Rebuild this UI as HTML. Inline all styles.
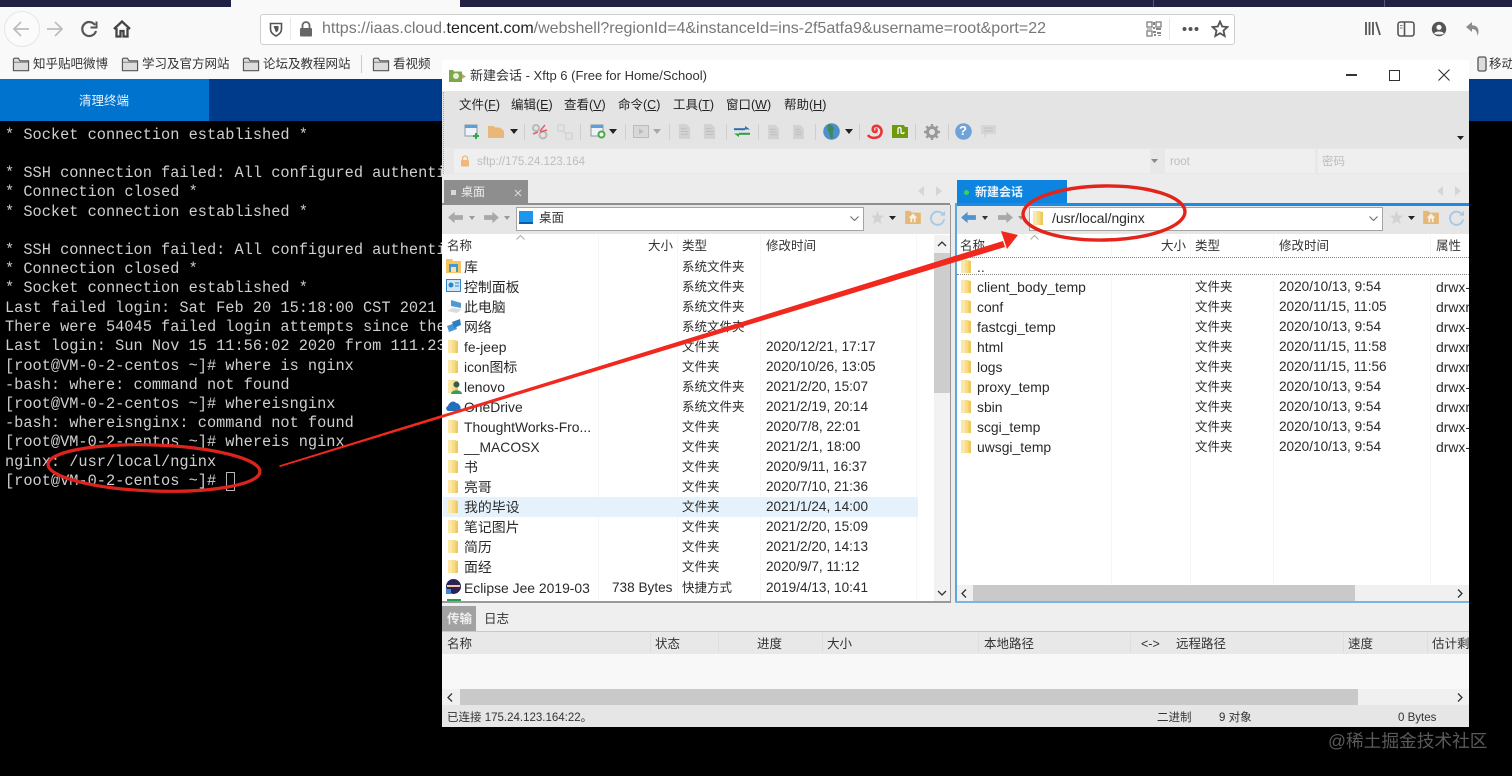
<!DOCTYPE html>
<html lang="zh"><head><meta charset="utf-8"><title>Xftp</title>
<style>
html{background:#000}
html,body{margin:0;padding:0;width:1512px;height:776px;overflow:hidden}
body{position:relative;font-family:"Liberation Sans","Noto Sans CJK SC",sans-serif;font-size:13px;color:#222;filter:blur(.3px);background:#000}
div,span,svg{position:absolute}
.t{white-space:nowrap;line-height:20px}
.b{background:#f9f9fa}
.term{font-family:"Liberation Mono",monospace;font-size:15.3px;color:#cfcfcf;white-space:pre;left:5px;line-height:19.2px;margin-top:1px}
.bm{top:54px;font-size:12.5px;color:#333;white-space:nowrap;line-height:20px}
.m{top:95px;font-size:12.5px;color:#222;white-space:nowrap;line-height:20px}
.m u{text-decoration:underline}
.h{top:236px;font-size:12.5px;color:#333;white-space:nowrap;line-height:20px}
.r{font-size:13.9px;line-height:20px;color:#2a2a2a;white-space:nowrap;height:20px;margin-top:1px}
.c{font-size:12.5px;line-height:20px;color:#2a2a2a;white-space:nowrap;height:20px;margin-top:1px}
.d{font-size:13.6px;line-height:20px;color:#2a2a2a;white-space:nowrap;height:20px;margin-top:1px}
.a{font-size:13.9px;line-height:20px;color:#2a2a2a;white-space:nowrap;height:20px;margin-top:1px;left:1436px;width:33px;overflow:hidden}
.q{top:634px;font-size:12.5px;color:#333;white-space:nowrap;line-height:20px}
.s{top:708px;font-size:11.5px;color:#333;white-space:nowrap;line-height:20px}
.v{width:1px;background:#f6f6f6}
.sep{top:124px;width:1px;height:16px;background:#cfcfcf}
</style></head><body>

<svg width="0" height="0" style="left:0;top:0">
<defs>
<symbol id="bf" viewBox="0 0 20 18"><path d="M1.500 3.500V16.500H18.500V5.500H9L7 2.500H2.500Z" fill="#dcdcdc" stroke="#555" stroke-width="1.300"/><path d="M2 7H18" stroke="#777" stroke-width="1"/></symbol>
<symbol id="yf" viewBox="2 1 9.500 14" preserveAspectRatio="none"><path d="M2 1H9L11.500 2.500V15H2Z" fill="#f8dc85"/><path d="M2 1H6V15H2Z" fill="#fbe8a8"/><path d="M9 2H11.500V15H9Z" fill="#f0c860"/></symbol>
<symbol id="doc" viewBox="0 0 16 18"><path d="M2 1H10L14 5V17H2Z" fill="#d2d2d2"/><path d="M4 6H10M4 9H12M4 12H12" stroke="#bdbdbd"/></symbol>
<symbol id="lar" viewBox="0 0 18 14"><path d="M1 7 8 1V4.500H17V9.500H8V13Z" fill="#a8a8a8"/></symbol>
<symbol id="rar" viewBox="0 0 18 14"><path d="M17 7 10 1V4.500H1V9.500H10V13Z" fill="#a8a8a8"/></symbol>
<symbol id="home" viewBox="0 0 18 16"><path d="M0 1H6L7.500 3H18V16H0Z" fill="#e6b878"/><path d="M9 4 4 9H6V14H12V9H14Z" fill="#f7efe2"/><rect x="8" y="10" width="2" height="4" fill="#e6b878"/></symbol>
<symbol id="ref" viewBox="0 0 18 18"><path d="M15 6A7 7 0 1 0 16 11" fill="none" stroke="#a7c8e6" stroke-width="2"/><path d="M12 7H17V2Z" fill="#a7c8e6"/></symbol>
<symbol id="star" viewBox="0 0 16 16"><path d="M8 1 10 6H15L11 9.500 12.500 15 8 12 3.500 15 5 9.500 1 6H6Z" fill="#d2d2d2"/></symbol>
</defs></svg>

<!-- browser chrome -->
<div style="left:0;top:0;width:1512px;height:7px;background:#1f2044"></div>
<div style="left:231px;top:0;width:229px;height:8px;background:#f9f9fa"></div>
<div style="left:1153px;top:0;width:1px;height:7px;background:#55567a"></div>
<div style="left:1384px;top:0;width:1px;height:7px;background:#55567a"></div>
<div class="b" style="left:0;top:7px;width:1512px;height:72px"></div>

<div style="left:4px;top:11px;width:34px;height:34px;border:1px solid #e6e6e6;border-radius:50%;background:#fbfbfb"></div>
<svg style="left:12px;top:20px" width="18" height="18" viewBox="0 0 18 18"><path d="M17 9H2M9 2 2 9 9 16" fill="none" stroke="#bcbcbc" stroke-width="1.700"/></svg>
<svg style="left:46px;top:20px" width="18" height="18" viewBox="0 0 18 18"><path d="M1 9H16M9 2 16 9 9 16" fill="none" stroke="#bcbcbc" stroke-width="1.700"/></svg>
<svg style="left:80px;top:20px" width="18" height="18" viewBox="0 0 18 18"><path d="M15 5A7 7 0 1 0 16 11" fill="none" stroke="#555" stroke-width="2.200"/><path d="M16.500 1.500V7.500H10.500" fill="none" stroke="#555" stroke-width="2"/></svg>
<svg style="left:113px;top:20px" width="18" height="18" viewBox="0 0 18 18"><path d="M1 9 9 1.500 17 9M3.500 8V16.500H7.500V11H10.500V16.500H14.500V8" fill="none" stroke="#444" stroke-width="2.300"/></svg>

<div style="left:260px;top:14px;width:973px;height:29px;background:#fff;border:1px solid #cfcfcf;border-radius:3px"></div>
<svg style="left:269px;top:21px" width="14" height="16" viewBox="0 0 14 16"><path d="M1.500 2.500H12.500V8C12.500 11.500 10 13.500 7 15 4 13.500 1.500 11.500 1.500 8Z" fill="none" stroke="#555" stroke-width="1.600"/><path d="M4.500 5H9.500V8C9.500 9.500 8.500 10.500 7 11.500Z" fill="#555"/></svg>
<div style="left:290px;top:18px;width:1px;height:22px;background:#e6e6e6"></div>
<svg style="left:299px;top:21px" width="14" height="16" viewBox="0 0 14 16"><path d="M3.500 7V4.500A3.500 3.500 0 0 1 10.500 4.500V7" fill="none" stroke="#666" stroke-width="1.800"/><rect x="1" y="7" width="12" height="8.500" rx="1" fill="#666"/></svg>
<div class="t" style="left:322px;top:19px;font-size:16px;color:#777">https://iaas.cloud.<span style="position:static;color:#222">tencent.com</span>/webshell?regionId=4&amp;instanceId=ins-2f5atfa9&amp;username=root&amp;port=22</div>
<svg style="left:1146px;top:21px" width="16" height="16" viewBox="0 0 16 16"><g fill="none" stroke="#888" stroke-width="1.400"><rect x="1" y="1" width="5" height="5"/><rect x="10" y="1" width="5" height="5"/><rect x="1" y="10" width="5" height="5"/></g><path d="M7 1H9V4H7ZM7 6H9V8H7ZM1 7.500H6V8.500H1ZM10 7H15V9H10ZM7 10H10V12H7ZM11 11H15V13H11ZM8 13H10V15H8ZM12 14H15V15H12Z" fill="#888"/></svg>
<div style="left:1169px;top:18px;width:1px;height:22px;background:#e6e6e6"></div>
<svg style="left:1182px;top:26px" width="17" height="6" viewBox="0 0 17 6"><circle cx="2.500" cy="3" r="2" fill="#555"/><circle cx="8.500" cy="3" r="2" fill="#555"/><circle cx="14.500" cy="3" r="2" fill="#555"/></svg>
<svg style="left:1211px;top:20px" width="18" height="18" viewBox="0 0 18 18"><path d="M9 1.500 11.200 6.500 16.500 7 12.500 10.600 13.700 16 9 13.200 4.300 16 5.500 10.600 1.500 7 6.800 6.500Z" fill="none" stroke="#555" stroke-width="1.800"/></svg>

<svg style="left:1364px;top:20px" width="18" height="17" viewBox="0 0 18 17"><path d="M2 2V15M5.500 2V15M9 2V15M12 2 16 15" fill="none" stroke="#555" stroke-width="1.800"/></svg>
<svg style="left:1397px;top:21px" width="18" height="16" viewBox="0 0 18 16"><rect x="1" y="1" width="16" height="14" rx="2.500" fill="none" stroke="#555" stroke-width="1.600"/><path d="M7.500 1V15" stroke="#555" stroke-width="1.600"/><path d="M3 4.500H5.500M3 7H5.500" stroke="#777"/></svg>
<svg style="left:1431px;top:21px" width="16" height="16" viewBox="0 0 16 16"><circle cx="8" cy="8" r="7.200" fill="#555"/><circle cx="8" cy="6.300" r="2.600" fill="#f9f9fa"/><path d="M3 12.500C4.500 9.800 11.500 9.800 13 12.500 11 14 5 14 3 12.500Z" fill="#f9f9fa"/></svg>
<svg style="left:1465px;top:21px" width="16" height="16" viewBox="0 0 16 16"><path d="M7 1 1 6 7 11V8C10 8 12 9.500 12.500 15 14.500 10 14 4.500 7 4.200Z" fill="#8c8c8c"/></svg>

<svg style="left:12px;top:56px" width="18" height="16"><use href="#bf"/></svg><div class="bm" style="left:33px">知乎贴吧微博</div>
<svg style="left:121px;top:56px" width="18" height="16"><use href="#bf"/></svg><div class="bm" style="left:142px">学习及官方网站</div>
<svg style="left:242px;top:56px" width="18" height="16"><use href="#bf"/></svg><div class="bm" style="left:263px">论坛及教程网站</div>
<div style="left:361px;top:55px;width:1px;height:18px;background:#ccc"></div>
<svg style="left:372px;top:56px" width="18" height="16"><use href="#bf"/></svg><div class="bm" style="left:393px">看视频</div>
<svg style="left:1477px;top:56px" width="10" height="16" viewBox="0 0 10 16"><rect x="1" y="1" width="8" height="14" rx="1.500" fill="#ddd" stroke="#555" stroke-width="1.300"/></svg><div class="bm" style="left:1489px">移动</div>

<!-- page -->
<div style="left:0;top:79px;width:1512px;height:42px;background:#003a8a"></div>
<div style="left:0;top:79px;width:209px;height:42px;background:#0073ce"></div>
<div class="t" style="left:79px;top:91px;font-size:12.5px;color:#e6f2ff">清理终端</div>

<!-- terminal -->
<div class="term" style="top:125px">* Socket connection established *</div>
<div class="term" style="top:163px">* SSH connection failed: All configured authentication</div>
<div class="term" style="top:182px">* Connection closed *</div>
<div class="term" style="top:202px">* Socket connection established *</div>
<div class="term" style="top:240px">* SSH connection failed: All configured authentication</div>
<div class="term" style="top:259px">* Connection closed *</div>
<div class="term" style="top:278px">* Socket connection established *</div>
<div class="term" style="top:298px">Last failed login: Sat Feb 20 15:18:00 CST 2021 from</div>
<div class="term" style="top:317px">There were 54045 failed login attempts since the last</div>
<div class="term" style="top:336px">Last login: Sun Nov 15 11:56:02 2020 from 111.231.0.0</div>
<div class="term" style="top:356px">[root@VM-0-2-centos ~]# where is nginx</div>
<div class="term" style="top:375px">-bash: where: command not found</div>
<div class="term" style="top:394px">[root@VM-0-2-centos ~]# whereisnginx</div>
<div class="term" style="top:413px">-bash: whereisnginx: command not found</div>
<div class="term" style="top:432px">[root@VM-0-2-centos ~]# whereis nginx</div>
<div class="term" style="top:452px">nginx: /usr/local/nginx</div>
<div class="term" style="top:471px">[root@VM-0-2-centos ~]#</div>
<div style="left:226px;top:472px;width:7px;height:17px;border:1.500px solid #b5b5b5"></div>

<!-- Xftp window -->
<div id="win" style="left:442px;top:60px;width:1027px;height:667px;background:#ececec;overflow:hidden">
  <div style="left:0;top:0;width:1027px;height:31px;background:#fff"></div>
  <div style="left:0;top:31px;width:1027px;height:57px;background:#e4e4e4"></div>
  <div style="left:0;top:88px;width:1027px;height:26px;background:#e8e8e8"></div>
  <div style="left:12px;top:89px;width:696px;height:24px;background:#efefef"></div>
  <div style="left:723px;top:89px;width:150px;height:24px;background:#efefef"></div>
  <div style="left:876px;top:89px;width:150px;height:24px;background:#efefef"></div>
  <div style="left:1px;top:32px;width:0;height:82px;border-left:1.500px dotted #aaa"></div>
</div>
<svg style="left:449px;top:69px" width="17" height="14" viewBox="0 0 17 14"><path d="M0 1H4L5 2.500H13V13H0Z" fill="#7ca84a"/><rect x="4" y="4" width="6" height="6" rx="3" fill="#e8f0d8"/><path d="M13 5 17 7.500 13 10Z" fill="#b9a77a"/></svg>
<div class="t" style="left:470px;top:66px;font-size:13px;color:#333">新建会话 - Xftp 6 (Free for Home/School)</div>
<div style="left:1346px;top:74px;width:11px;height:1.500px;background:#333"></div>
<div style="left:1389px;top:70px;width:9px;height:9px;border:1.300px solid #333"></div>
<svg style="left:1438px;top:69px" width="12" height="12" viewBox="0 0 12 12"><path d="M.5 .5 11.500 11.500M11.500 .5 .5 11.500" stroke="#333" stroke-width="1.100"/></svg>

<div class="m" style="left:459px">文件(<u>F</u>)</div>
<div class="m" style="left:511px">编辑(<u>E</u>)</div>
<div class="m" style="left:564px">查看(<u>V</u>)</div>
<div class="m" style="left:618px">命令(<u>C</u>)</div>
<div class="m" style="left:673px">工具(<u>T</u>)</div>
<div class="m" style="left:726px">窗口(<u>W</u>)</div>
<div class="m" style="left:784px">帮助(<u>H</u>)</div>

<!-- toolbar -->
<svg style="left:464px;top:124px" width="17" height="16" viewBox="0 0 17 16"><rect x="1" y="1" width="12" height="11" fill="#eef3f8" stroke="#8a97a5"/><rect x="1" y="1" width="12" height="3" fill="#5aa0dc"/><path d="M12 9V15M9 12H15" stroke="#2aa84a" stroke-width="2"/></svg>
<svg style="left:488px;top:125px" width="16" height="13" viewBox="0 0 16 13"><path d="M0 1H6L7 2.500H12L16 6V13H0Z" fill="#e9b878"/></svg>
<svg style="left:531px;top:123px" width="18" height="17" viewBox="0 0 18 17"><circle cx="5" cy="5" r="3" fill="none" stroke="#b8b8b8" stroke-width="2"/><circle cx="12" cy="12" r="3.500" fill="none" stroke="#b8b8b8" stroke-width="2"/><path d="M9 8 14 2M2 11 7 9M9 9 16 7" stroke="#e85b6a" stroke-width="1.500"/></svg>
<svg style="left:557px;top:124px" width="16" height="16" viewBox="0 0 16 16"><rect x="1" y="1" width="6" height="6" fill="none" stroke="#d4d4d4" stroke-width="1.500"/><rect x="9" y="9" width="6" height="6" fill="none" stroke="#d4d4d4" stroke-width="1.500"/><path d="M5 7 10 10" stroke="#d4d4d4" stroke-width="1.500"/></svg>
<svg style="left:590px;top:124px" width="17" height="16" viewBox="0 0 17 16"><rect x="1" y="1" width="12" height="11" fill="#eef3f8" stroke="#8a97a5"/><rect x="1" y="1" width="12" height="3" fill="#5aa0dc"/><circle cx="11.500" cy="10.500" r="3" fill="#fff" stroke="#4aa84a" stroke-width="2"/></svg>
<svg style="left:633px;top:125px" width="16" height="14" viewBox="0 0 16 14"><rect x=".5" y=".5" width="15" height="12" fill="#d8d8d8" stroke="#bbb"/><path d="M6 3.500 11 6.500 6 9.500Z" fill="#bbb"/></svg>
<svg style="left:677px;top:123px" width="15" height="17"><use href="#doc"/></svg>
<svg style="left:702px;top:123px" width="15" height="17"><use href="#doc"/></svg>
<svg style="left:733px;top:124px" width="18" height="15" viewBox="0 0 18 15"><path d="M1 5H12V2L17 5.500H1Z" fill="#2b6fb3"/><path d="M1 5.200H12" stroke="#2b6fb3" stroke-width="2"/><path d="M17 10H6V13L1 9.500H17Z" fill="#2f9e44"/><path d="M17 9.800H6" stroke="#2f9e44" stroke-width="2"/></svg>
<svg style="left:766px;top:124px" width="15" height="16"><use href="#doc"/></svg>
<svg style="left:791px;top:124px" width="15" height="16"><use href="#doc"/></svg>
<svg style="left:823px;top:123px" width="17" height="17" viewBox="0 0 17 17"><circle cx="8.500" cy="8.500" r="8.300" fill="#4f8fc9"/><path d="M6 1C10 2 12 5 10 8 9 11 11 13 9 16 6 14 7 10 5 8 4 5 4 3 6 1Z" fill="#3c8a5a"/></svg>
<svg style="left:867px;top:124px" width="17" height="16" viewBox="0 0 17 16"><path d="M1 11C3 15 12 15 14 10 16 5 12 1 8 2 5 3 5 8 8 8 10 8 10 5 8.500 5" fill="none" stroke="#e8363a" stroke-width="2.600"/></svg>
<svg style="left:892px;top:125px" width="16" height="13" viewBox="0 0 16 13"><path d="M0 0H12L13 2H16V13H0Z" fill="#6f9a10"/><path d="M6 9V4C6 2 9 2 9 4V7C9 9 12 9 12 7" fill="none" stroke="#fff" stroke-width="1.300"/></svg>
<svg style="left:924px;top:124px" width="16" height="16" viewBox="0 0 16 16"><circle cx="8" cy="8" r="4.500" fill="none" stroke="#999" stroke-width="3"/><path d="M8 0V3M8 13V16M0 8H3M13 8H16M2.300 2.300 4.500 4.500M11.500 11.500 13.700 13.700M2.300 13.700 4.500 11.500M11.500 4.500 13.700 2.300" stroke="#999" stroke-width="2.400"/></svg>
<svg style="left:955px;top:123px" width="17" height="17" viewBox="0 0 17 17"><circle cx="8.500" cy="8.500" r="8.300" fill="#6fa3d8"/></svg>
<div class="t" style="left:959px;top:121px;font-size:13px;font-weight:bold;color:#fff">?</div>
<svg style="left:980px;top:124px" width="17" height="15" viewBox="0 0 17 15"><path d="M1 1H16V10H7L4 14V10H1Z" fill="#d6d6d6"/><path d="M4 4H13M4 7H13" stroke="#c0c0c0"/></svg>
<svg style="left:510px;top:129px" width="8" height="5"><path d="M0 0H8L4 5Z" fill="#222"/></svg>
<svg style="left:609px;top:129px" width="8" height="5"><path d="M0 0H8L4 5Z" fill="#222"/></svg>
<svg style="left:653px;top:129px" width="8" height="5"><path d="M0 0H8L4 5Z" fill="#a8a8a8"/></svg>
<svg style="left:845px;top:129px" width="8" height="5"><path d="M0 0H8L4 5Z" fill="#222"/></svg>
<svg style="left:1457px;top:136px" width="7" height="4"><path d="M0 0H7L3.500 4Z" fill="#222"/></svg>
<div class="sep" style="left:524px"></div><div class="sep" style="left:580px"></div><div class="sep" style="left:625px"></div><div class="sep" style="left:669px"></div><div class="sep" style="left:726px"></div><div class="sep" style="left:758px"></div><div class="sep" style="left:815px"></div><div class="sep" style="left:859px"></div><div class="sep" style="left:915px"></div><div class="sep" style="left:948px"></div>

<svg style="left:460px;top:155px" width="10" height="12" viewBox="0 0 10 12"><path d="M2.500 5V3.500A2.500 2.500 0 0 1 7.500 3.500V5" fill="none" stroke="#eeb978" stroke-width="1.300"/><rect x="1" y="5" width="8" height="6.500" rx="1" fill="#eeb978"/></svg>
<div class="t" style="left:477px;top:152px;font-size:11.5px;color:#bdbdbd">sftp://175.24.123.164</div>
<div class="t" style="left:1170px;top:152px;font-size:11.500px;color:#bdbdbd">root</div>
<div class="t" style="left:1322px;top:152px;font-size:11.500px;color:#bdbdbd">密码</div>
<svg style="left:1151px;top:159px" width="7" height="4"><path d="M0 0H7L3.500 4Z" fill="#888"/></svg>

<!-- tabs row -->
<div style="left:442px;top:174px;width:1027px;height:30px;background:#ececec"></div>
<div style="left:444px;top:180px;width:84px;height:23px;background:#8e8e8e"></div>
<div style="left:442px;top:203px;width:508px;height:2px;background:#8e8e8e"></div>
<div style="left:451px;top:190px;width:5px;height:5px;background:#d8d8d8"></div>
<div class="t" style="left:461px;top:182px;font-size:12px;color:#eee">桌面</div>
<svg style="left:514px;top:189px" width="8" height="8"><path d="M1 1 7 7M7 1 1 7" stroke="#ddd" stroke-width="1"/></svg>
<svg style="left:918px;top:186px" width="6" height="10"><path d="M6 0V10L0 5Z" fill="#d5d5d5"/></svg>
<svg style="left:936px;top:186px" width="6" height="10"><path d="M0 0V10L6 5Z" fill="#d5d5d5"/></svg>

<div style="left:957px;top:180px;width:110px;height:23px;background:#0d84e0"></div>
<div style="left:955px;top:203px;width:514px;height:3px;background:#1f8ae0"></div>
<div style="left:964px;top:190px;width:5px;height:5px;border-radius:50%;background:#39d353"></div>
<div class="t" style="left:975px;top:182px;font-size:12px;font-weight:bold;color:#e8f4ff">新建会话</div>
<svg style="left:1437px;top:186px" width="6" height="10"><path d="M6 0V10L0 5Z" fill="#d5d5d5"/></svg>
<svg style="left:1455px;top:186px" width="6" height="10"><path d="M0 0V10L6 5Z" fill="#d5d5d5"/></svg>

<!-- left panel -->
<div style="left:442px;top:205px;width:508px;height:29px;background:#e6e6e6"></div>
<div style="left:442px;top:234px;width:508px;height:367px;background:#fff;overflow:hidden"></div>
<div style="left:950px;top:205px;width:5px;height:398px;background:#ececec;border-left:1px solid #999;box-sizing:border-box"></div>
<svg style="left:447px;top:211px" width="17" height="13"><use href="#lar"/></svg>
<svg style="left:469px;top:216px" width="6" height="4"><path d="M0 0H6L3 4Z" fill="#999"/></svg>
<svg style="left:483px;top:211px" width="17" height="13"><use href="#rar"/></svg>
<svg style="left:504px;top:216px" width="6" height="4"><path d="M0 0H6L3 4Z" fill="#999"/></svg>
<div style="left:516px;top:207px;width:346px;height:22px;background:#fff;border:1px solid #a4a4a4"></div>
<div style="left:519px;top:211px;width:14px;height:13px;background:#1e96ee;border-bottom:2px solid #0a5ea8;box-sizing:border-box"></div>
<div class="t" style="left:539px;top:208px;font-size:12.500px;color:#333">桌面</div>
<svg style="left:850px;top:216px" width="9" height="5"><path d="M.5 .5 4.500 4.500 8.500 .5" fill="none" stroke="#666"/></svg>
<svg style="left:870px;top:210px" width="15" height="15"><use href="#star"/></svg>
<svg style="left:889px;top:216px" width="7" height="4"><path d="M0 0H7L3.500 4Z" fill="#222"/></svg>
<svg style="left:905px;top:210px" width="16" height="14"><use href="#home"/></svg>
<svg style="left:929px;top:209px" width="17" height="17"><use href="#ref"/></svg>

<div class="h" style="left:447px">名称</div>
<svg style="left:516px;top:235px" width="9" height="5"><path d="M.5 4.500 4.500 .5 8.500 4.500" fill="none" stroke="#aaa"/></svg>
<div class="h" style="left:648px">大小</div>
<div class="h" style="left:682px">类型</div>
<div class="h" style="left:766px">修改时间</div>
<div class="v" style="left:598px;top:235px;height:365px"></div>
<div class="v" style="left:677px;top:235px;height:365px"></div>
<div class="v" style="left:760px;top:235px;height:365px"></div>
<div class="v" style="left:916px;top:235px;height:365px"></div>

<div style="left:443px;top:497px;width:475px;height:20px;background:#e6f2fb"></div>

<!-- left icons -->
<svg style="left:446px;top:259px" width="15" height="14" viewBox="0 0 15 14"><path d="M0 0H6L7 2H15V14H0Z" fill="#f5c65f"/><rect x="3" y="5" width="9" height="8" fill="#4a96c8"/><rect x="5" y="8" width="5" height="5" fill="#f5e3a8"/></svg>
<svg style="left:446px;top:279px" width="15" height="13" viewBox="0 0 15 13"><rect x=".5" y=".5" width="14" height="12" fill="#cfe6f7" stroke="#2e86c8"/><circle cx="5" cy="6" r="2.500" fill="#2e86c8"/><path d="M9 4H13M9 7H13" stroke="#2e86c8"/></svg>
<svg style="left:447px;top:299px" width="15" height="15" viewBox="0 0 15 15"><path d="M4 1 14 4V9L4 7Z" fill="#4a9ad8"/><path d="M0 12 5 9 15 10 10 14Z" fill="#dcdcdc"/></svg>
<svg style="left:446px;top:319px" width="15" height="14" viewBox="0 0 15 14"><path d="M1 7 9 4 11 10 3 13Z" fill="#4a96d0"/><path d="M6 3 14 0 15 6 8 9Z" fill="#2f7fc0"/></svg>
<svg style="left:448px;top:340px" width="10" height="13"><use href="#yf"/></svg>
<svg style="left:448px;top:360px" width="10" height="13"><use href="#yf"/></svg>
<svg style="left:448px;top:380px" width="10" height="13"><use href="#yf"/></svg>
<svg style="left:451px;top:381px" width="11" height="13" viewBox="0 0 11 13"><circle cx="5.500" cy="3.500" r="3" fill="#3a5a4a"/><path d="M0 13C0 8 11 8 11 13Z" fill="#3f9a60"/></svg>
<svg style="left:446px;top:400px" width="15" height="11" viewBox="0 0 15 11"><path d="M3 11C0 11-1 7 2 6 3 2 8 0 10 3 13 3 16 7 14 11Z" fill="#1f6fc0"/></svg>
<svg style="left:448px;top:420px" width="10" height="13"><use href="#yf"/></svg>
<svg style="left:448px;top:440px" width="10" height="13"><use href="#yf"/></svg>
<svg style="left:448px;top:460px" width="10" height="13"><use href="#yf"/></svg>
<svg style="left:448px;top:480px" width="10" height="13"><use href="#yf"/></svg>
<svg style="left:448px;top:500px" width="10" height="13"><use href="#yf"/></svg>
<svg style="left:448px;top:520px" width="10" height="13"><use href="#yf"/></svg>
<svg style="left:448px;top:540px" width="10" height="13"><use href="#yf"/></svg>
<svg style="left:448px;top:560px" width="10" height="13"><use href="#yf"/></svg>
<svg style="left:446px;top:579px" width="15" height="15" viewBox="0 0 15 15"><circle cx="7.500" cy="7.500" r="7.500" fill="#2c2255"/><path d="M1 6H14V8H1Z" fill="#f3c9a0"/><rect x="0" y="10" width="5" height="5" fill="#3b8ad8"/></svg>
<div style="left:447px;top:599px;width:14px;height:2px;background:#1fa04a"></div>

<div class="r" style="left:464px;top:256px">库</div><div class="c" style="left:682px;top:256px">系统文件夹</div>
<div class="r" style="left:464px;top:276px">控制面板</div><div class="c" style="left:682px;top:276px">系统文件夹</div>
<div class="r" style="left:464px;top:296px">此电脑</div><div class="c" style="left:682px;top:296px">系统文件夹</div>
<div class="r" style="left:464px;top:316px">网络</div><div class="c" style="left:682px;top:316px">系统文件夹</div>
<div class="r" style="left:464px;top:336px">fe-jeep</div><div class="c" style="left:682px;top:336px">文件夹</div><div class="d" style="left:766px;top:336px">2020/12/21, 17:17</div>
<div class="r" style="left:464px;top:356px">icon图标</div><div class="c" style="left:682px;top:356px">文件夹</div><div class="d" style="left:766px;top:356px">2020/10/26, 13:05</div>
<div class="r" style="left:464px;top:376px">lenovo</div><div class="c" style="left:682px;top:376px">系统文件夹</div><div class="d" style="left:766px;top:376px">2021/2/20, 15:07</div>
<div class="r" style="left:464px;top:396px">OneDrive</div><div class="c" style="left:682px;top:396px">系统文件夹</div><div class="d" style="left:766px;top:396px">2021/2/19, 20:14</div>
<div class="r" style="left:464px;top:416px">ThoughtWorks-Fro...</div><div class="c" style="left:682px;top:416px">文件夹</div><div class="d" style="left:766px;top:416px">2020/7/8, 22:01</div>
<div class="r" style="left:464px;top:436px">__MACOSX</div><div class="c" style="left:682px;top:436px">文件夹</div><div class="d" style="left:766px;top:436px">2021/2/1, 18:00</div>
<div class="r" style="left:464px;top:456px">书</div><div class="c" style="left:682px;top:456px">文件夹</div><div class="d" style="left:766px;top:456px">2020/9/11, 16:37</div>
<div class="r" style="left:464px;top:476px">亮哥</div><div class="c" style="left:682px;top:476px">文件夹</div><div class="d" style="left:766px;top:476px">2020/7/10, 21:36</div>
<div class="r" style="left:464px;top:496px">我的毕设</div><div class="c" style="left:682px;top:496px">文件夹</div><div class="d" style="left:766px;top:496px">2021/1/24, 14:00</div>
<div class="r" style="left:464px;top:516px">笔记图片</div><div class="c" style="left:682px;top:516px">文件夹</div><div class="d" style="left:766px;top:516px">2021/2/20, 15:09</div>
<div class="r" style="left:464px;top:536px">简历</div><div class="c" style="left:682px;top:536px">文件夹</div><div class="d" style="left:766px;top:536px">2021/2/20, 14:13</div>
<div class="r" style="left:464px;top:556px">面经</div><div class="c" style="left:682px;top:556px">文件夹</div><div class="d" style="left:766px;top:556px">2020/9/7, 11:12</div>
<div class="r" style="left:464px;top:577px">Eclipse Jee 2019-03</div><div class="d" style="left:612px;top:577px">738 Bytes</div><div class="c" style="left:682px;top:577px">快捷方式</div><div class="d" style="left:766px;top:577px">2019/4/13, 10:41</div>

<!-- left vscroll -->
<div style="left:934px;top:235px;width:16px;height:366px;background:#f2f2f2"></div>
<div style="left:934px;top:253px;width:16px;height:140px;background:#cdcdcd"></div>
<svg style="left:937px;top:241px" width="10" height="6"><path d="M1 5 5 1 9 5" fill="none" stroke="#333" stroke-width="1.300"/></svg>
<svg style="left:937px;top:590px" width="10" height="6"><path d="M1 1 5 5 9 1" fill="none" stroke="#333" stroke-width="1.300"/></svg>
<div style="left:442px;top:601px;width:508px;height:2px;background:#999"></div>

<!-- right panel -->
<div style="left:955px;top:206px;width:514px;height:28px;background:#e6e6e6"></div>
<div style="left:955px;top:234px;width:514px;height:367px;background:#fff"></div>
<div style="left:955px;top:203px;width:2px;height:399px;background:#5aa7dc"></div>
<div style="left:955px;top:601px;width:514px;height:2px;background:#79b5de"></div>
<svg style="left:960px;top:211px" width="17" height="13" viewBox="0 0 18 14"><path d="M1 7 8 1V4.500H17V9.500H8V13Z" fill="#4f93d1"/></svg>
<svg style="left:982px;top:216px" width="6" height="4"><path d="M0 0H6L3 4Z" fill="#333"/></svg>
<svg style="left:997px;top:211px" width="17" height="13"><use href="#rar"/></svg>
<svg style="left:1018px;top:216px" width="6" height="4"><path d="M0 0H6L3 4Z" fill="#999"/></svg>
<div style="left:1029px;top:207px;width:352px;height:22px;background:#fff;border:1px solid #a4a4a4"></div>
<svg style="left:1033px;top:211px" width="10" height="14"><use href="#yf"/></svg>
<div class="t" style="left:1052px;top:208px;font-size:13.900px;color:#2a2a2a">/usr/local/nginx</div>
<svg style="left:1369px;top:216px" width="9" height="5"><path d="M.5 .5 4.500 4.500 8.500 .5" fill="none" stroke="#666"/></svg>
<svg style="left:1389px;top:210px" width="15" height="15"><use href="#star"/></svg>
<svg style="left:1408px;top:216px" width="7" height="4"><path d="M0 0H7L3.500 4Z" fill="#222"/></svg>
<svg style="left:1423px;top:210px" width="16" height="14"><use href="#home"/></svg>
<svg style="left:1448px;top:209px" width="17" height="17"><use href="#ref"/></svg>

<div class="h" style="left:960px">名称</div>
<svg style="left:1030px;top:235px" width="9" height="5"><path d="M.5 4.500 4.500 .5 8.500 4.500" fill="none" stroke="#aaa"/></svg>
<div class="h" style="left:1161px">大小</div>
<div class="h" style="left:1195px">类型</div>
<div class="h" style="left:1279px">修改时间</div>
<div class="h" style="left:1436px">属性</div>
<div class="v" style="left:1111px;top:235px;height:350px"></div>
<div class="v" style="left:1190px;top:235px;height:350px"></div>
<div class="v" style="left:1273px;top:235px;height:350px"></div>
<div class="v" style="left:1430px;top:235px;height:350px"></div>
<div style="left:957px;top:257px;width:512px;height:18px;border-top:1px dotted #888;border-bottom:1px dotted #888;box-sizing:border-box;background:#fff"></div>

<svg style="left:961px;top:260px" width="10" height="13"><use href="#yf"/></svg>
<svg style="left:961px;top:280px" width="10" height="13"><use href="#yf"/></svg>
<svg style="left:961px;top:300px" width="10" height="13"><use href="#yf"/></svg>
<svg style="left:961px;top:320px" width="10" height="13"><use href="#yf"/></svg>
<svg style="left:961px;top:340px" width="10" height="13"><use href="#yf"/></svg>
<svg style="left:961px;top:360px" width="10" height="13"><use href="#yf"/></svg>
<svg style="left:961px;top:380px" width="10" height="13"><use href="#yf"/></svg>
<svg style="left:961px;top:400px" width="10" height="13"><use href="#yf"/></svg>
<svg style="left:961px;top:420px" width="10" height="13"><use href="#yf"/></svg>
<svg style="left:961px;top:440px" width="10" height="13"><use href="#yf"/></svg>

<div class="r" style="left:977px;top:256px">..</div>
<div class="r" style="left:977px;top:276px">client_body_temp</div><div class="c" style="left:1195px;top:276px">文件夹</div><div class="d" style="left:1279px;top:276px">2020/10/13, 9:54</div><div class="a" style="top:276px">drwx------</div>
<div class="r" style="left:977px;top:296px">conf</div><div class="c" style="left:1195px;top:296px">文件夹</div><div class="d" style="left:1279px;top:296px">2020/11/15, 11:05</div><div class="a" style="top:296px">drwxr-xr-x</div>
<div class="r" style="left:977px;top:316px">fastcgi_temp</div><div class="c" style="left:1195px;top:316px">文件夹</div><div class="d" style="left:1279px;top:316px">2020/10/13, 9:54</div><div class="a" style="top:316px">drwx------</div>
<div class="r" style="left:977px;top:336px">html</div><div class="c" style="left:1195px;top:336px">文件夹</div><div class="d" style="left:1279px;top:336px">2020/11/15, 11:58</div><div class="a" style="top:336px">drwxr-xr-x</div>
<div class="r" style="left:977px;top:356px">logs</div><div class="c" style="left:1195px;top:356px">文件夹</div><div class="d" style="left:1279px;top:356px">2020/11/15, 11:56</div><div class="a" style="top:356px">drwxr-xr-x</div>
<div class="r" style="left:977px;top:376px">proxy_temp</div><div class="c" style="left:1195px;top:376px">文件夹</div><div class="d" style="left:1279px;top:376px">2020/10/13, 9:54</div><div class="a" style="top:376px">drwx------</div>
<div class="r" style="left:977px;top:396px">sbin</div><div class="c" style="left:1195px;top:396px">文件夹</div><div class="d" style="left:1279px;top:396px">2020/10/13, 9:54</div><div class="a" style="top:396px">drwxr-xr-x</div>
<div class="r" style="left:977px;top:416px">scgi_temp</div><div class="c" style="left:1195px;top:416px">文件夹</div><div class="d" style="left:1279px;top:416px">2020/10/13, 9:54</div><div class="a" style="top:416px">drwx------</div>
<div class="r" style="left:977px;top:436px">uwsgi_temp</div><div class="c" style="left:1195px;top:436px">文件夹</div><div class="d" style="left:1279px;top:436px">2020/10/13, 9:54</div><div class="a" style="top:436px">drwx------</div>

<!-- right hscroll -->
<div style="left:957px;top:585px;width:512px;height:16px;background:#f0f0f0"></div>
<div style="left:973px;top:585px;width:382px;height:16px;background:#c9c9c9"></div>
<svg style="left:961px;top:589px" width="6" height="9"><path d="M5 .5 1 4.500 5 8.500" fill="none" stroke="#333" stroke-width="1.300"/></svg>
<svg style="left:1457px;top:589px" width="6" height="9"><path d="M1 .5 5 4.500 1 8.500" fill="none" stroke="#333" stroke-width="1.300"/></svg>

<!-- transfer -->
<div style="left:442px;top:603px;width:1027px;height:28px;background:#efefef"></div>
<div style="left:442px;top:606px;width:34px;height:25px;background:#a2a2a2"></div>
<div class="t" style="left:447px;top:609px;font-size:12.500px;font-weight:bold;color:#eee">传输</div>
<div class="t" style="left:484px;top:609px;font-size:12.500px;color:#333">日志</div>
<div style="left:442px;top:631px;width:1027px;height:23px;background:#e8e8e8;border-top:1px solid #c8c8c8;box-sizing:border-box"></div>
<div style="left:442px;top:654px;width:1027px;height:35px;background:#f8f8f8"></div>
<div class="q" style="left:447px">名称</div><div class="q" style="left:655px">状态</div><div class="q" style="left:757px">进度</div><div class="q" style="left:827px">大小</div><div class="q" style="left:984px">本地路径</div><div class="q" style="left:1141px">&lt;-&gt;</div><div class="q" style="left:1176px">远程路径</div><div class="q" style="left:1348px">速度</div><div class="q" style="left:1432px;width:37px;overflow:hidden">估计剩余</div>
<div style="left:650px;top:633px;width:1px;height:20px;background:#dedede"></div>
<div style="left:718px;top:633px;width:1px;height:20px;background:#dedede"></div>
<div style="left:822px;top:633px;width:1px;height:20px;background:#dedede"></div>
<div style="left:978px;top:633px;width:1px;height:20px;background:#dedede"></div>
<div style="left:1130px;top:633px;width:1px;height:20px;background:#dedede"></div>
<div style="left:1343px;top:633px;width:1px;height:20px;background:#dedede"></div>
<div style="left:1427px;top:633px;width:1px;height:20px;background:#dedede"></div>

<div style="left:442px;top:689px;width:1027px;height:16px;background:#f0f0f0"></div>
<div style="left:460px;top:689px;width:898px;height:16px;background:#c9c9c9"></div>
<svg style="left:447px;top:693px" width="6" height="9"><path d="M5 .5 1 4.500 5 8.500" fill="none" stroke="#333" stroke-width="1.300"/></svg>
<svg style="left:1457px;top:693px" width="6" height="9"><path d="M1 .5 5 4.500 1 8.500" fill="none" stroke="#333" stroke-width="1.300"/></svg>
<div style="left:442px;top:705px;width:1027px;height:22px;background:#e6e6e6"></div>
<div class="s" style="left:447px">已连接 175.24.123.164:22。</div>
<div class="s" style="left:1157px">二进制</div>
<div class="s" style="left:1219px">9 对象</div>
<div class="s" style="left:1398px">0 Bytes</div>

<div class="t" style="left:1328px;top:731px;font-size:17.7px;color:#5a5a5a">@稀土掘金技术社区</div>

<!-- annotations -->
<svg style="left:0;top:0;pointer-events:none" width="1512" height="776" viewBox="0 0 1512 776">
<path d="M279 465.500 1003 241 1005 247 280 467Z" fill="#f0281e"/>
<path d="M1018 235 1001 231 1007 249Z" fill="#f0281e"/>
<ellipse cx="154" cy="468" rx="106" ry="23" transform="rotate(2 154 468)" fill="none" stroke="#dc241c" stroke-width="3.200"/>
<ellipse cx="1104" cy="213" rx="81" ry="27" transform="rotate(-1 1104 213)" fill="none" stroke="#e3241a" stroke-width="3.400"/>
</svg>
</body></html>
